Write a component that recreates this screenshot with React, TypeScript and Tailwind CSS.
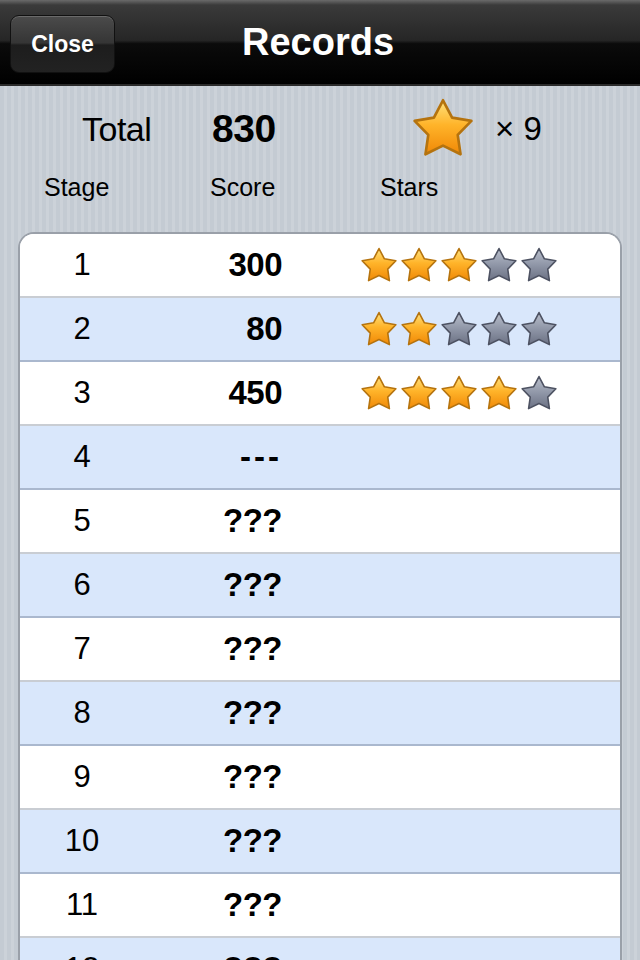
import { useId } from "react"

function Star({ on, size }: { on: boolean; size: number }) {
  const id = useId()
  return (
    <svg width={size} height={size} viewBox="0 0 24 24">
      <defs>
        <linearGradient id={id} x1="0" y1="0" x2="0" y2="1">
          {on ? (
            <>
              <stop offset="0" stopColor="#ffe27e" />
              <stop offset="0.45" stopColor="#ffb42a" />
              <stop offset="1" stopColor="#f08806" />
            </>
          ) : (
            <>
              <stop offset="0" stopColor="#babfcc" />
              <stop offset="0.5" stopColor="#9097a8" />
              <stop offset="1" stopColor="#6b7183" />
            </>
          )}
        </linearGradient>
      </defs>
      <polygon
        points="12,1.6 15.41,8.11 22.65,9.34 17.52,14.59 18.58,21.86 12,18.6 5.42,21.86 6.48,14.59 1.35,9.34 8.59,8.11"
        fill={`url(#${id})`}
        stroke={on ? "#b5730e" : "#4d5262"}
        strokeWidth="1"
        strokeLinejoin="round"
      />
    </svg>
  )
}

const records = [
  { stage: 1, score: "300", stars: 3 },
  { stage: 2, score: "80", stars: 2 },
  { stage: 3, score: "450", stars: 4 },
  { stage: 4, score: "---", stars: -1 },
  ...Array.from({ length: 10 }, (_, i) => ({ stage: i + 5, score: "???", stars: -1 })),
]

export default function App() {
  return (
    <div
      className="h-[960px] w-[640px] overflow-hidden flex flex-col bg-[repeating-linear-gradient(90deg,#c4cbd3_0px,#c4cbd3_4px,#ccd2d9_4px,#ccd2d9_7px)] text-black"
      style={{ fontFamily: '"Liberation Sans", Arial, sans-serif' }}
    >
      {/* nav bar */}
      <div className="h-[86px] shrink-0 relative flex items-center justify-center bg-[linear-gradient(#6a6a6a,#3a3a3a_6%,#262626_48%,#0b0b0b_52%,#000)] border-b-2 border-[#2a2a2a]">
        <button className="absolute left-[10px] top-[15px] w-[105px] h-[58px] rounded-[9px] border border-[#111] bg-[linear-gradient(#4b4b4b,#353535_48%,#1d1d1d_52%,#222)] shadow-[inset_0_1px_0_rgba(255,255,255,0.18)] text-white font-bold text-[23px]">
          Close
        </button>
        <h1 className="text-white font-bold text-[38px] -ml-[4px]">Records</h1>
      </div>

      {/* totals */}
      <div className="h-[146px] shrink-0 flex flex-col">
        <div className="h-[84px] flex items-center pl-[82px] pt-[2px]">
          <div className="w-[130px] text-[34px] tracking-[-0.5px]">Total</div>
          <div className="w-[199px] text-[39px] font-bold tracking-[-0.5px]">830</div>
          <div className="w-[84px] -mt-[2px]">
            <Star on size={64} />
          </div>
          <div className="text-[33px]">× 9</div>
        </div>
        <div className="h-[36px] flex items-center pl-[44px] text-[25px]">
          <div className="w-[166px]">Stage</div>
          <div className="w-[170px]">Score</div>
          <div>Stars</div>
        </div>
      </div>

      {/* table */}
      <div className="mx-[18px] rounded-t-[16px] border-2 border-b-0 border-[#9aa0a9] overflow-hidden bg-white">
        {records.map((r, i) => (
          <div
            key={r.stage}
            className={
              i % 2 === 0
                ? "h-[64px] flex items-center bg-white border-b-2 border-[#c9cdd3]"
                : "h-[64px] flex items-center bg-[#d9e7fb] border-b-2 border-[#aab8ce]"
            }
          >
            <div className="w-[124px] text-center text-[31px]">{r.stage}</div>
            <div
              className={
                r.score === "---"
                  ? "w-[138px] text-right text-[33px] font-bold tracking-[3px] -mr-[3px]"
                  : "w-[138px] text-right text-[33px] font-bold tracking-[-0.5px]"
              }
            >
              {r.score}
            </div>
            {r.stars >= 0 && (
              <div className="flex ml-[78px] gap-[2px]">
                {[0, 1, 2, 3, 4].map((s) => (
                  <Star key={s} on={s < r.stars} size={38} />
                ))}
              </div>
            )}
          </div>
        ))}
      </div>
    </div>
  )
}
